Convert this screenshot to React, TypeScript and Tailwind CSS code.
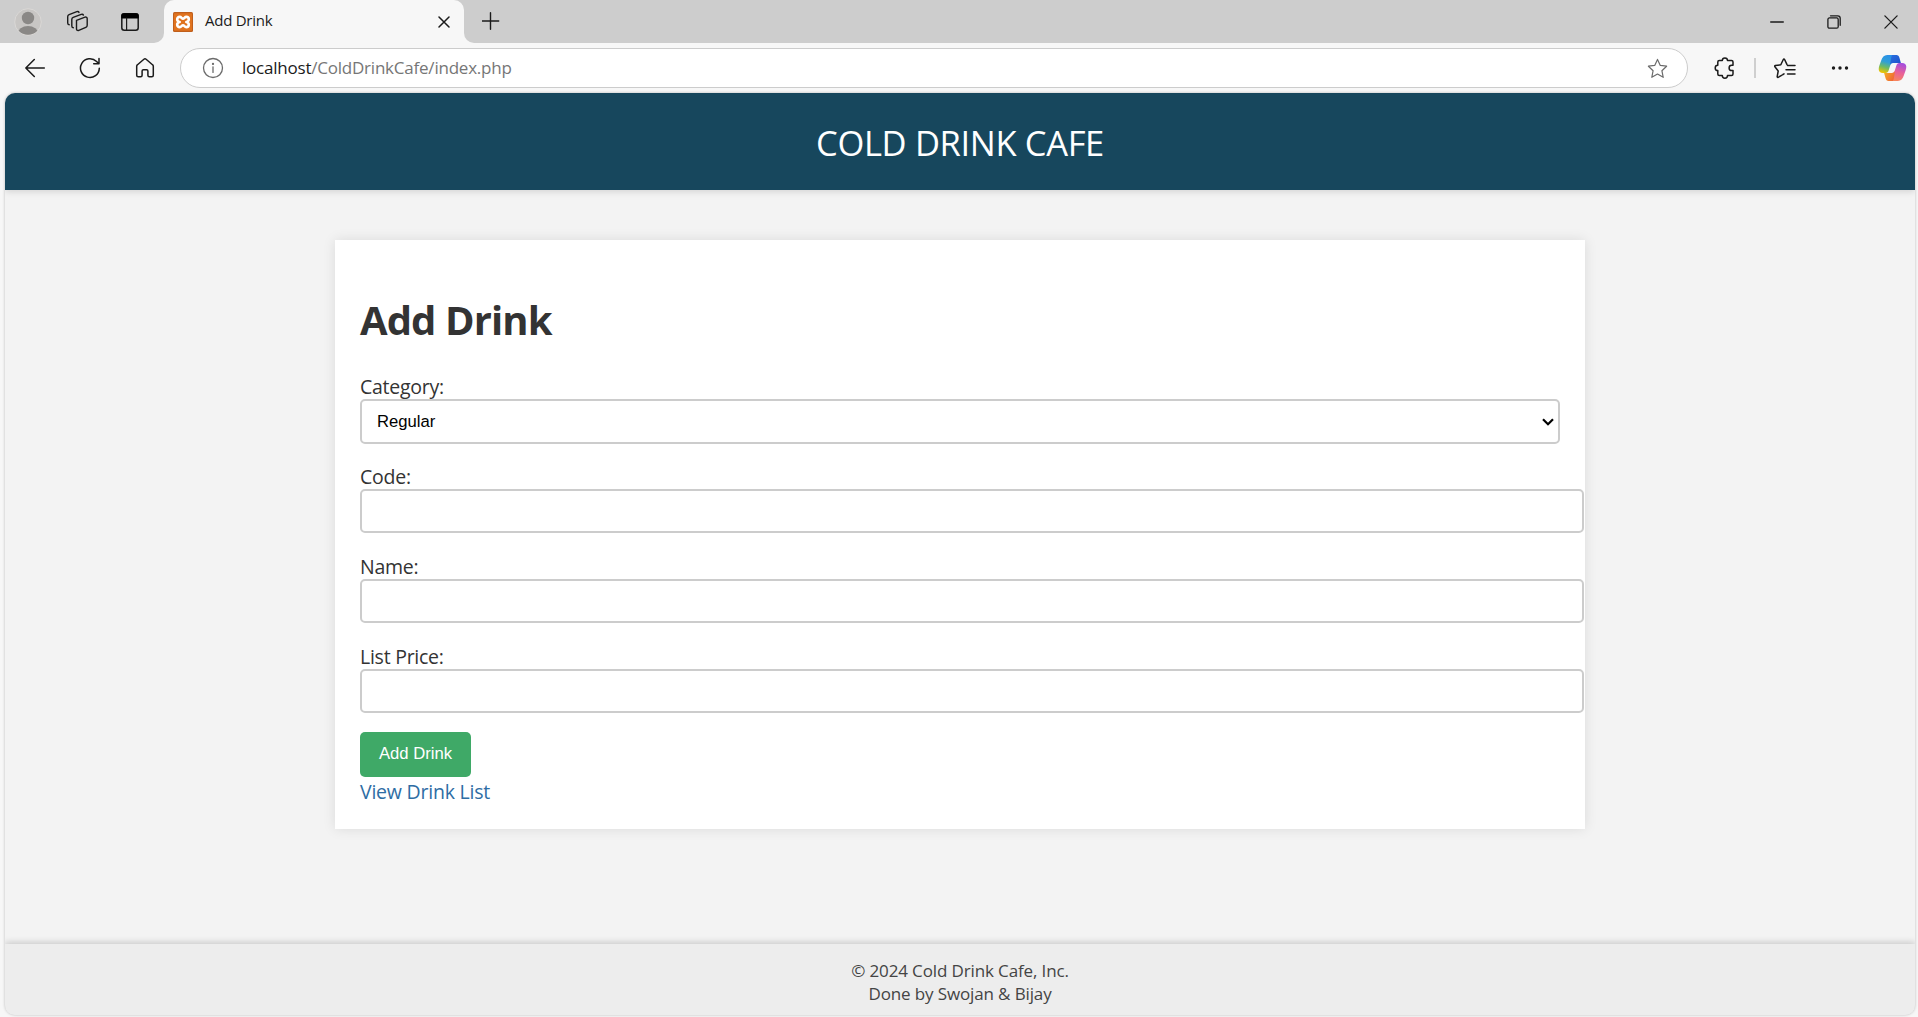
import type { ReactNode } from "react";

type IconProps = { size?: number; vb?: string; sw?: number; color?: string; children: ReactNode };

function Icon({ size = 22, vb = "0 0 22 22", sw = 1.5, color = "#1b1b1b", children }: IconProps) {
  return (
    <svg
      width={size}
      height={size}
      viewBox={vb}
      fill="none"
      stroke={color}
      strokeWidth={sw}
      strokeLinecap="round"
      strokeLinejoin="round"
      className="block shrink-0"
    >
      {children}
    </svg>
  );
}

const STAR = "M10.5 1.4l2.8 6 6.3.8-4.7 4.5 1.3 6.6-5.7-3.3-5.7 3.3 1.3-6.6-4.7-4.5 6.3-.8z";
const RIBBON =
  "M19 1H9.200C6 1 4.300 3.200 3.200 6.500 2 10 .7 12.700.7 15.200.7 17.600 2.300 19 5 19h2.600c1.700 0 2.500-1 3.100-2.800l1.500-4.700c.5-1.600 1.400-2.500 3-2.500z";
const FOLD = "M14.500 1h3.700c2 0 2.800 1.200 3.300 3l1.400 5h-8.200c-1.500 0-2.300.6-2.800 2.200l1.200-7.200c.4-1.800.7-2.700 1.400-3z";

function CopilotLogo() {
  return (
    <svg width="29" height="28" viewBox="0 0 29 28" className="block shrink-0">
      <defs>
        <linearGradient id="cpA" x1="0.6" y1="0" x2="0.3" y2="1">
          <stop offset="0" stopColor="#2a8fe8" />
          <stop offset="0.4" stopColor="#2f9fd8" />
          <stop offset="0.7" stopColor="#6fbb62" />
          <stop offset="1" stopColor="#f0c400" />
        </linearGradient>
        <linearGradient id="cpB" x1="0.3" y1="1" x2="0.6" y2="0">
          <stop offset="0" stopColor="#a24de0" />
          <stop offset="0.5" stopColor="#e8609a" />
          <stop offset="1" stopColor="#f8865a" />
        </linearGradient>
        <linearGradient id="cpC" x1="0" y1="0" x2="1" y2="1">
          <stop offset="0" stopColor="#2a6fe0" />
          <stop offset="1" stopColor="#1c50c8" />
        </linearGradient>
        <linearGradient id="cpD" x1="1" y1="0.6" x2="0" y2="0">
          <stop offset="0" stopColor="#f5a623" />
          <stop offset="1" stopColor="#ee5a3a" />
        </linearGradient>
      </defs>
      <path d={RIBBON} fill="url(#cpA)" />
      <path d={FOLD} fill="url(#cpC)" />
      <g transform="rotate(180 14.500 14)">
        <path d={RIBBON} fill="url(#cpB)" />
        <path d={FOLD} fill="url(#cpD)" />
      </g>
    </svg>
  );
}

function XamppIcon() {
  return (
    <svg width="20" height="20" viewBox="0 0 20 20" className="block shrink-0">
      <rect width="20" height="20" rx="1.500" fill="#c05f1c" />
      <rect x="1" y="1.200" width="18" height="17.600" rx="1" fill="#e0731f" />
      <path
        d="M6.700 10C4.900 9.600 4.200 8.500 4.200 7.300 4.200 5.800 5.300 4.900 6.700 4.900c1.700 0 2 1.900 3.300 1.900s1.600-1.900 3.300-1.900c1.400 0 2.500.9 2.500 2.400 0 1.200-.7 2.300-2.500 2.700 1.800.4 2.500 1.500 2.500 2.700 0 1.500-1.100 2.400-2.500 2.400-1.700 0-2-1.900-3.300-1.900s-1.600 1.900-3.300 1.900c-1.400 0-2.500-.9-2.500-2.400 0-1.200.7-2.300 2.500-2.700z"
        fill="none"
        stroke="#fff"
        strokeWidth="2.600"
        strokeLinejoin="round"
      />
    </svg>
  );
}

function TabStrip() {
  return (
    <div className="flex h-[43px] bg-[#f7f7f7]">
      <div className="flex w-[164px] items-center rounded-br-[10px] bg-[#cdcdcd] pl-[14px]">
        <svg width="28" height="28" viewBox="0 0 28 28" className="block shrink-0">
          <defs>
            <clipPath id="avatar">
              <circle cx="14" cy="14" r="12.800" />
            </clipPath>
          </defs>
          <circle cx="14" cy="14" r="13.300" fill="#c8c6c4" stroke="#dad8d6" strokeWidth="1" />
          <g clipPath="url(#avatar)" fill="#8a8886">
            <circle cx="14" cy="10" r="6.200" />
            <ellipse cx="14" cy="25.500" rx="10.300" ry="7.500" />
          </g>
        </svg>
        <div className="ml-[24px]">
          <Icon size={23} vb="0 0 23 23" sw={1.4}>
            <path d="M10.500 10.300l8.500-3.100c1.200-.4 2.200.2 2.200 1.400v6.600c0 1-.5 1.700-1.400 2.100l-7 3c-1.300.5-2.300-.1-2.300-1.400z" />
            <path d="M7.300 17.700c-1-.1-1.500-.7-1.500-1.700V9.500c0-1 .5-1.700 1.400-2.100l8-3c1-.4 1.900 0 2.200.7" />
            <path d="M3.200 14.700c-1-.1-1.500-.7-1.500-1.700V6.700c0-1 .5-1.700 1.400-2.100l7.700-2.900c1-.4 1.900 0 2.200.7" />
          </Icon>
        </div>
        <div className="ml-[32px]">
          <Icon size={18} vb="0 0 18 18">
            <rect x="0.800" y="0.800" width="16.400" height="16.400" rx="2.500" />
            <path d="M1 2.500C1 1.500 1.800 1 2.800 1h12.400c1 0 1.800.6 1.800 1.500V4.800H1z" fill="#000" stroke="#000" />
            <path d="M5.600 5v12" strokeWidth="1.200" />
          </Icon>
        </div>
      </div>
      <div className="w-[300px] bg-linear-to-b from-[#cdcdcd] from-50% to-[#f7f7f7] to-50%">
        <div className="flex h-full items-center rounded-t-[10px] bg-[#f7f7f7] pl-[9px] pr-[14px]">
          <XamppIcon />
          <span className="ml-[12px] pb-[3px] text-[15px] leading-5 tracking-[-0.25px] text-[#1b1b1b]">Add Drink</span>
          <div className="ml-auto">
            <Icon size={12} vb="0 0 12 12">
              <path d="M1 1l10 10M11 1L1 11" />
            </Icon>
          </div>
        </div>
      </div>
      <div className="flex flex-1 items-center rounded-bl-[10px] bg-[#cdcdcd] pl-[18px] pr-[20px]">
        <div className="pb-[2px]">
          <Icon size={18} vb="0 0 18 18" sw={1.4}>
            <path d="M8.500.8v16.400M.3 9h16.400" />
          </Icon>
        </div>
        <div className="ml-auto flex items-center gap-[43px]">
          <Icon size={14} vb="0 0 14 14" sw={1.3}>
            <path d="M.7 7h12.600" />
          </Icon>
          <Icon size={14} vb="0 0 14 14" sw={1.3}>
            <rect x="0.900" y="2.900" width="10.300" height="10.300" rx="1.500" />
            <path d="M3.500.8h7.200c1.500 0 2.500 1 2.500 2.500v7" />
          </Icon>
          <Icon size={14} vb="0 0 14 14" sw={1.3}>
            <path d="M.9.9l12.200 12.200M13.100.9L.9 13.100" />
          </Icon>
        </div>
      </div>
    </div>
  );
}

function Toolbar() {
  return (
    <div className="flex h-[50px] items-center bg-[#f7f7f7] pl-[24px] pr-[11px]">
      <div className="pb-px">
        <Icon>
          <path d="M20.300 11H1.800M10.300 2.500L1.800 11l8.500 8.500" />
        </Icon>
      </div>
      <div className="ml-[33px] pb-px">
        <Icon>
          <path d="M20.300 11.200A9.400 9.400 0 1 1 17.600 4.500l2 2M20 1.500v5.300h-5.300" />
        </Icon>
      </div>
      <div className="ml-[33px] pb-px">
        <Icon>
          <path d="M2.700 9.300c0-.7.300-1.200.8-1.600l6.400-5.500c.7-.6 1.500-.6 2.200 0l6.400 5.500c.5.400.8.900.8 1.600v9c0 .9-.6 1.500-1.500 1.500h-2.500c-.9 0-1.400-.6-1.400-1.500v-4.200c0-.9-.5-1.400-1.300-1.400H9.400c-.8 0-1.300.5-1.300 1.400v4.200c0 .9-.5 1.500-1.400 1.500H4.200c-.9 0-1.500-.6-1.500-1.500z" />
        </Icon>
      </div>
      <div className="ml-[24px] flex h-[40px] w-[1508px] items-center rounded-full border border-[#cccccc] bg-white pl-[21px] pr-[19px]">
        <Icon sw={1.3} color="#6b6b6b">
          <circle cx="11" cy="11" r="9.500" />
          <path d="M11 9.800v5.600" />
          <circle cx="11" cy="6.900" r="0.500" fill="#6b6b6b" />
        </Icon>
        <span className="ml-[18px] text-[17px] leading-6 tracking-[-0.22px] whitespace-pre text-[#767676]">
          <span className="text-[#1b1b1b]">localhost</span>/ColdDrinkCafe/index.php
        </span>
        <div className="ml-auto">
          <Icon size={21} vb="0 0 21 21" sw={1.2} color="#6b6b6b">
            <path d={STAR} />
          </Icon>
        </div>
      </div>
      <div className="ml-[26px] pb-px">
        <Icon>
          <path d="M8.300 3.600a2.600 2.600 0 0 1 5.200 0h4c.9 0 1.500.6 1.500 1.500v3.200h-1.300a2.600 2.600 0 0 0 0 5.200H19v3.600c0 .9-.6 1.500-1.500 1.500h-4a2.600 2.600 0 0 1-5.200 0h-3c-.9 0-1.500-.6-1.500-1.500v-3.600a2.600 2.600 0 0 1 0-5.200V5.100c0-.9.600-1.500 1.500-1.500z" />
        </Icon>
      </div>
      <div className="ml-[18px] h-[20px] w-[2px] bg-[#cfcfcf]" />
      <div className="ml-[18px] pb-px">
        <Icon>
          <path d="M8 18.200l-3.900 2.100c-.6.300-1-.1-.9-.7l1-5.600L.9 9.700c-.4-.4-.2-1 .4-1.100l5.500-.8 2.500-5.300c.3-.6 1-.6 1.300 0l2.300 4.900M13.500 8.500H21M12 12.700h9M13.500 16.900H21M9 17.500l1-.6" />
        </Icon>
      </div>
      <div className="ml-[35px] pb-px">
        <Icon size={18} vb="0 0 18 18" sw={0}>
          <g fill="#1b1b1b">
            <circle cx="2.500" cy="9" r="1.700" />
            <circle cx="9" cy="9" r="1.700" />
            <circle cx="15.500" cy="9" r="1.700" />
          </g>
        </Icon>
      </div>
      <div className="ml-auto">
        <CopilotLogo />
      </div>
    </div>
  );
}

function Field({ label, children }: { label: string; children: ReactNode }) {
  return (
    <div className="flex flex-col">
      <label className="h-[26px] text-[19.500px] leading-[28px] tracking-[-0.25px]">{label}</label>
      {children}
    </div>
  );
}

function TextInput() {
  return (
    <input
      type="text"
      className="h-[44px] w-[1224px] rounded-[5px] border-2 border-[#cccccc] bg-white px-[14px] outline-none"
    />
  );
}

export default function App() {
  return (
    <div className="flex h-[1017px] w-[1918px] flex-col overflow-hidden bg-[#f7f7f7] font-['Open_Sans',sans-serif] text-[#333333]">
      <TabStrip />
      <Toolbar />
      <div className="mx-[5px] mb-[2px] w-[1910px] flex-1 overflow-hidden rounded-[10px] bg-[#f3f3f3] shadow-[0_0_3px_rgba(0,0,0,0.25)]">
        <div className="flex h-full flex-col">
          <header className="flex h-[97px] items-center justify-center bg-[#17475d] pt-[2px] shadow-[0_2px_6px_rgba(0,0,0,0.12)]">
            <span className="text-[34.500px] leading-[46px] tracking-[-0.35px] text-white">COLD DRINK CAFE</span>
          </header>
          <main className="mx-auto mt-[50px] h-[589px] w-[1250px] bg-white p-[25px] shadow-[0_0_12px_rgba(0,0,0,0.1)]">
            <h1 className="mt-[28px] mb-[27px] h-[53px] text-[40px] leading-[53px] font-bold tracking-[-0.9px]">Add Drink</h1>
            <Field label="Category:">
              <div className="relative mb-[19px]">
                <select className="block h-[45px] w-full appearance-none rounded-[5px] border-2 border-[#cccccc] bg-white px-[15px] font-['Liberation_Sans',Arial,sans-serif] text-[16.670px] text-black outline-none">
                  <option>Regular</option>
                </select>
                <svg
                  width="12"
                  height="8"
                  viewBox="0 0 12 8"
                  className="pointer-events-none absolute top-[19px] right-[6px]"
                  fill="none"
                  stroke="#000"
                  strokeWidth="2.200"
                >
                  <path d="M1 1.300l5 5 5-5" />
                </svg>
              </div>
            </Field>
            <div className="flex flex-col gap-5">
              <Field label="Code:">
                <TextInput />
              </Field>
              <Field label="Name:">
                <TextInput />
              </Field>
              <Field label="List Price:">
                <TextInput />
              </Field>
            </div>
            <button className="mt-[19px] block h-[45px] w-[111px] rounded-[5px] bg-[#3fa967] pb-[3px] font-['Liberation_Sans',Arial,sans-serif] text-[16.670px] text-white">
              Add Drink
            </button>
            <a className="block pt-[2px] text-[19.500px] leading-[26px] tracking-[-0.22px] text-[#2e6da4]">View Drink List</a>
          </main>
          <footer className="mt-auto h-[71px] bg-[#ededed] pt-[15px] text-center text-[17px] leading-[23px] tracking-[-0.13px] text-[#444444] shadow-[0_-2px_6px_rgba(0,0,0,0.16)]">
            <p>© 2024 Cold Drink Cafe, Inc.</p>
            <p>Done by Swojan &amp; Bijay</p>
          </footer>
        </div>
      </div>
    </div>
  );
}
